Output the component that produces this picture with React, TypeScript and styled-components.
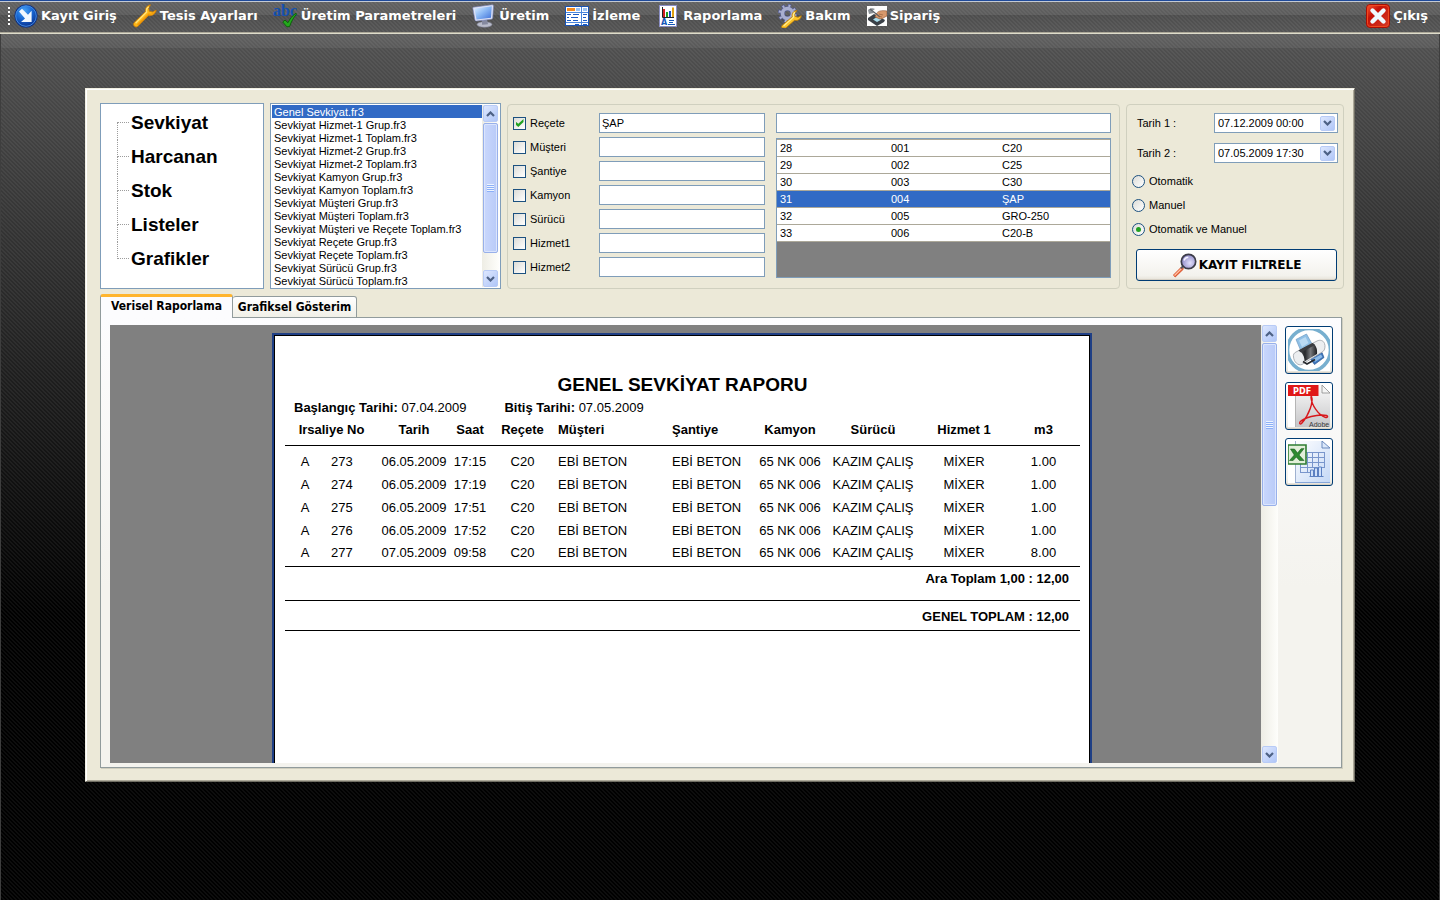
import React, { useState } from "react";
import styled, { createGlobalStyle, css } from "styled-components";

const uiFont = '"Liberation Sans", Arial, sans-serif';
const boldUiFont = '"DejaVu Sans", Verdana, sans-serif';
const tabFont = '"DejaVu Sans Condensed", "DejaVu Sans", Tahoma, sans-serif';

const GlobalStyle = createGlobalStyle`
  *, *::before, *::after { box-sizing: border-box; }
  body { margin: 0; background: #000; color: #000; font: 11px/13px ${uiFont}; }
  button, input, select { font: inherit; color: inherit; margin: 0; }
`;

const stripes = css`
  linear-gradient(45deg, rgba(255,255,255,0.05) 25%, transparent 25%, transparent 50%,
    rgba(255,255,255,0.05) 50%, rgba(255,255,255,0.05) 75%, transparent 75%) 0 0 / 4px 4px
`;

const Screen = styled.div`
  height: 100vh;
  min-height: 700px;
  display: flex;
  flex-direction: column;
`;

/* ---------- toolbar ---------- */

const Toolbar = styled.nav`
  flex: none;
  height: 34px;
  display: flex;
  align-items: center;
  gap: 16px;
  padding: 0 12px 2px 14px;
  border-top: 1px solid #1f4a9a;
  border-bottom: 1px solid #dedccb;
  box-shadow: inset 0 1px 0 #c4cad4, inset 0 -1px 0 #aca899;
  background: ${stripes}, linear-gradient(#626262, #5c5c5c 44%, #4d4d4d 45%, #555555);
`;

const Grip = styled.span`
  width: 2px;
  height: 18px;
  margin: 0 -12px 0 -6px;
  background: repeating-linear-gradient(#ffffff 0 2px, transparent 2px 4px);
`;

const ToolItem = styled.button<{ $last?: boolean }>`
  display: flex;
  align-items: center;
  gap: 3px;
  padding: 0;
  border: 0;
  background: none;
  color: #fff;
  font: bold 13px/24px ${boldUiFont};
  white-space: nowrap;
  margin-left: ${(p) => (p.$last ? "auto" : "0")};
  svg { display: block; flex: none; }
`;

/* ---------- window ---------- */

const Desktop = styled.div`
  flex: 1;
  min-height: 0;
  display: flex;
  padding: 54px 84px 118px;
  border: solid #3e3e3e;
  border-width: 0 1px;
  background: ${stripes},
    linear-gradient(#606060 0, #5a5a5a 14px, #4f4f4f 14px, #363636 180px, #1c1c1c 360px, #000 580px);
`;

const Window = styled.main`
  flex: 1;
  min-width: 0;
  display: flex;
  flex-direction: column;
  padding: 14px 10px 13px 14px;
  background: #ece9d8;
  border: 1px solid;
  border-color: #f1efe2 #716f64 #716f64 #f1efe2;
  box-shadow: inset 1px 1px 0 #fff, inset -1px -1px 0 #aca899;
`;

const FilterRow = styled.section`
  display: flex;
  gap: 6px;
  height: 186px;
  flex: none;
`;

const Tree = styled.ul`
  flex: none;
  width: 164px;
  margin: 0;
  padding: 2px 0 0 16px;
  list-style: none;
  background: #fff;
  border: 1px solid #7f9db9;
`;

const TreeItem = styled.li`
  display: flex;
  align-items: center;
  height: 34px;
`;

const TreeLink = styled.a`
  color: #000;
  text-decoration: none;
  font: bold 19px/24px ${uiFont};
  padding-left: 2px;
`;

const Branch = styled.span`
  display: flex;
  flex-direction: column;
  width: 12px;
  height: 34px;
`;

const BranchHalf = styled.span<{ $stem: boolean; $arm?: boolean }>`
  height: 17px;
  border: 0 dotted #9c9c9c;
  border-left-width: ${(p) => (p.$stem ? "1px" : "0")};
  border-bottom-width: ${(p) => (p.$arm ? "1px" : "0")};
`;

const ListFrame = styled.div`
  flex: none;
  display: flex;
  width: 231px;
  padding: 1px;
  background: #fff;
  border: 1px solid #7f9db9;
`;

const FileList = styled.select`
  flex: 1;
  min-width: 0;
  height: 182px;
  padding: 0;
  border: 0;
  border-radius: 0;
  outline: 0;
  background: #fff;
  overflow: hidden;
  scrollbar-width: none;
  option {
    height: 13px;
    min-height: 13px;
    padding: 1px 2px 0;
    font: 11px/12px ${uiFont};
    color: #000;
  }
  option:checked {
    background: linear-gradient(#316ac5, #316ac5);
    color: #fff;
  }
`;

const Group = styled.fieldset<{ $wide?: boolean }>`
  margin: 1px 0 0;
  border: 1px solid #d0d0bf;
  border-radius: 4px;
  min-width: 0;
  display: flex;
  ${(p) =>
    p.$wide
      ? css`
          flex: 1;
          gap: 11px;
          padding: 8px 8px 10px 5px;
        `
      : css`
          flex: none;
          width: 218px;
          flex-direction: column;
          padding: 8px 5px 0;
        `}
`;

const Criteria = styled.div`
  flex: none;
  display: flex;
  flex-direction: column;
  gap: 4px;
`;

const CriteriaRow = styled.div`
  display: flex;
  align-items: center;
  gap: 4px;
  label { width: 65px; }
`;

const TextBox = styled.input<{ $width?: string }>`
  width: ${(p) => p.$width ?? "100%"};
  height: 20px;
  flex: none;
  padding: 0 2px;
  border: 1px solid #7f9db9;
  border-radius: 0;
  background: #fff;
  outline: 0;
`;

const tick = css`
  appearance: none;
  flex: none;
  width: 13px;
  height: 13px;
  display: grid;
  place-content: center;
  border: 1px solid #1c5180;
  background: linear-gradient(135deg, #dcdcd7, #fff);
`;

const CheckBox = styled.input`
  ${tick}
  &:checked::after {
    content: "";
    width: 8px;
    height: 8px;
    background: #21a121;
    clip-path: polygon(0 30%, 35% 60%, 100% 0, 100% 38%, 35% 100%, 0 68%);
  }
`;

const Radio = styled.input`
  ${tick}
  border-radius: 50%;
  &:checked::after {
    content: "";
    width: 5px;
    height: 5px;
    border-radius: 50%;
    background: #21a121;
  }
`;

const Lookup = styled.div`
  flex: 1;
  min-width: 0;
  display: flex;
  flex-direction: column;
  gap: 5px;
`;

const GridFrame = styled.div`
  flex: 1;
  background: #808080;
  border: 1px solid #7f9db9;
`;

const GridTable = styled.table`
  width: 100%;
  table-layout: fixed;
  border-collapse: collapse;
  border-top: 1px solid #aca899;
  background: #fff;
  td {
    height: 17px;
    padding: 1px 3px 0;
    line-height: 15px;
    border-bottom: 1px solid #aca899;
  }
`;

const GridRow = styled.tr<{ $selected: boolean }>`
  ${(p) =>
    p.$selected &&
    css`
      background: #316ac5;
      color: #fff;
    `}
`;

const DateRow = styled.div`
  display: flex;
  align-items: center;
  justify-content: space-between;
  padding-left: 5px;
  margin-bottom: 10px;
`;

const DateBox = styled.div`
  display: flex;
  align-items: center;
  width: 124px;
  height: 20px;
  padding-right: 2px;
  background: #fff;
  border: 1px solid #7f9db9;
  input {
    flex: 1;
    min-width: 0;
    padding: 0 3px;
    border: 0;
    outline: 0;
    background: none;
  }
`;

const ArrowButton = styled.button<{ $tall?: boolean }>`
  flex: none;
  display: grid;
  place-content: center;
  width: 15px;
  height: ${(p) => (p.$tall ? "17px" : "15px")};
  padding: 0;
  border: 1px solid #b8cbf6;
  border-radius: 2px;
  background: linear-gradient(135deg, #dde7fe, #b0c6f8);
  svg { display: block; }
`;

const RadioList = styled.div`
  margin-top: -4px;
`;

const RadioRow = styled.label`
  display: flex;
  align-items: center;
  gap: 4px;
  height: 24px;
`;

const XpButton = styled.button`
  display: flex;
  align-items: center;
  justify-content: center;
  padding: 0;
  border: 1px solid #003c74;
  border-radius: 3px;
  background: linear-gradient(#fff, #f3f2ed 85%, #e6e2d8);
  box-shadow: inset 0 -1px 0 #d6d0c5;
`;

const FilterButton = styled(XpButton)`
  height: 32px;
  margin: 8px 1px 0 4px;
  gap: 2px;
  font: bold 12px/16px ${boldUiFont};
  white-space: nowrap;
`;

/* ---------- tabs and report viewer ---------- */

const TabBar = styled.div`
  display: flex;
  align-items: flex-end;
  flex: none;
  height: 24px;
  margin: 5px 0 -1px;
`;

const Tab = styled.button<{ $active?: boolean }>`
  font: bold 12px/16px ${tabFont};
  border: 1px solid #919b9c;
  border-radius: 3px 3px 0 0;
  white-space: nowrap;
  ${(p) =>
    p.$active
      ? css`
          width: 133px;
          height: 24px;
          padding: 0 0 4px;
          border-top: 3px solid #ffb52e;
          border-bottom: 0;
          background: #fcfcfe;
        `
      : css`
          width: 124px;
          height: 22px;
          padding: 0;
          border-left: 0;
          background: linear-gradient(#fff, #f1f0e8);
        `}
`;

const TabPanel = styled.section`
  flex: 1;
  min-height: 0;
  display: flex;
  margin-right: 2px;
  padding: 7px 8px 4px 9px;
  border: 1px solid #919b9c;
  background: linear-gradient(#fcfcfe, #f4f3ee 60%);
  box-shadow: 1px 1px 0 #d0cebf;
`;

/* The tab row overlaps this edge so that the active tab opens into the panel. */
const TabbedArea = styled.div`
  flex: 1;
  min-height: 0;
  display: flex;
  flex-direction: column;
  ${Tab} { z-index: 1; }
`;

const Viewer = styled.div`
  flex: 1;
  min-width: 0;
  display: flex;
  justify-content: center;
  padding: 8px 7px 0 0;
  overflow: hidden;
  background: #808080;
`;

const Paper = styled.article`
  width: 820px;
  flex: none;
  padding: 37px 10px 0 11px;
  border: solid #1f3f85;
  border-width: 2px 2px 0;
  box-shadow: inset 1px 1px 0 #000, inset -1px 0 0 #000;
  background: #fff;
  font-size: 13px;
  line-height: 16px;
`;

const ReportTitle = styled.h1`
  margin: 0 0 8px;
  padding-top: 2px;
  text-align: center;
  font: bold 19px/22px ${uiFont};
`;

const Period = styled.p`
  display: flex;
  gap: 38px;
  margin: -4px 0 0 9px;
`;

const ReportTable = styled.table`
  width: 100%;
  margin-top: 1px;
  table-layout: fixed;
  border-collapse: collapse;
  text-align: center;
  white-space: nowrap;
  th, td { padding: 0; }
  thead th { height: 28px; padding-bottom: 1px; border-bottom: 1px solid #000; }
  tbody td { height: 23px; }
  tbody tr:first-child td { height: 28px; padding-top: 6px; }
  tbody tr:last-child td { height: 24px; padding-bottom: 2px; }
  thead th:last-child, tbody td:last-child { padding-right: 5px; }
  tfoot td {
    height: 34px;
    padding: 4px 11px 0 0;
    vertical-align: top;
    border-top: 1px solid #000;
    text-align: right;
    font-weight: bold;
  }
  tfoot tr:last-child td {
    height: 30px;
    padding-top: 8px;
    border-bottom: 1px solid #000;
  }
`;

const Cell = styled.td<{ $left?: number }>`
  ${(p) => p.$left !== undefined && css`text-align: left; && { padding-left: ${p.$left}px; }`}
`;

const HeadCell = styled.th<{ $left?: number }>`
  ${(p) => p.$left !== undefined && css`text-align: left; && { padding-left: ${p.$left}px; }`}
`;

const Actions = styled.div`
  flex: none;
  display: flex;
  flex-direction: column;
  gap: 8px;
  margin-left: 7px;
  padding-top: 1px;
`;

const ActionButton = styled(XpButton)`
  width: 48px;
  height: 48px;
  svg { display: block; }
`;

/* ---------- scroll bar ---------- */

const ScrollTrack = styled.div`
  flex: none;
  width: 17px;
  display: flex;
  flex-direction: column;
  align-items: center;
  gap: 1px;
  background: linear-gradient(90deg, #eeede5, #fefefb);
`;

const ScrollSpace = styled.div`
  flex: 1;
  min-height: 0;
  width: 15px;
`;

const ScrollThumb = styled.div<{ $size: string }>`
  height: ${(p) => p.$size};
  display: grid;
  place-content: center;
  border: 1px solid #98b0ea;
  border-radius: 2px;
  box-shadow: inset 0 0 0 1px #dbe5fd;
  background: linear-gradient(90deg, #c9d7fc, #b9cbf8);
`;

const ThumbLines = styled.span`
  width: 7px;
  height: 8px;
  background: repeating-linear-gradient(#eef4fe 0 1px, #8cb0f8 1px 2px);
`;

const Chevron = ({ up }: { up?: boolean }) => (
  <svg width="9" height="6" viewBox="0 0 9 6" aria-hidden="true">
    <path d={up ? "M1 5l3.500-3.500L8 5" : "M1 1l3.500 3.500L8 1"} fill="none" stroke="#4d6185" strokeWidth="2.200" />
  </svg>
);

const ScrollBar = ({ size }: { size: string }) => (
  <ScrollTrack>
    <ArrowButton $tall type="button" aria-label="Yukarı"><Chevron up /></ArrowButton>
    <ScrollSpace>
      <ScrollThumb $size={size}><ThumbLines /></ScrollThumb>
    </ScrollSpace>
    <ArrowButton $tall type="button" aria-label="Aşağı"><Chevron /></ArrowButton>
  </ScrollTrack>
);

/* ---------- icons ---------- */

const LoginIcon = () => (
  <svg width="24" height="24" viewBox="0 0 24 24">
    <defs>
      <radialGradient id="login" cx="40%" cy="25%" r="80%">
        <stop offset="0" stopColor="#4aa3f5" />
        <stop offset=".5" stopColor="#1868d4" />
        <stop offset="1" stopColor="#0a2f8c" />
      </radialGradient>
    </defs>
    <circle cx="12" cy="12" r="11.500" fill="#0b2f86" />
    <circle cx="12" cy="12" r="10.300" fill="url(#login)" stroke="#4f9df0" strokeWidth=".8" />
    <path d="M5 7.500L8 4.800l6 6 3.600-4V18H7l4-3.500z" fill="#f1f8ff" />
  </svg>
);

const WrenchIcon = () => (
  <svg width="24" height="24" viewBox="0 0 24 24">
    <path
      d="M17.500.8c-3 .5-5.600 3-5 6.800L1.200 18.500c-1 1-.9 2.500 0 3.600 1.100 1.100 2.800 1.200 3.800.1L15.500 11.500c3.500.9 6.900-1.400 7.700-5.500L19.600 8l-3.300-.8-.6-3.100z"
      fill="#fdb515" stroke="#c77a08" strokeWidth=".8"
    />
    <path d="M15.600 2.900c-1.800 1.200-2.500 2.900-1.900 5.200L2.600 19.200" fill="none" stroke="#ffe37c" strokeWidth="1.400" />
    <path d="M22 7.800c-1.300 1.800-3.600 2.900-6.200 2.300L4.600 21" fill="none" stroke="#ee960c" strokeWidth="1.100" />
  </svg>
);

const SpellIcon = () => (
  <svg width="24" height="24" viewBox="0 0 24 24" overflow="visible">
    <text x="-1" y="12" fontFamily="Liberation Serif, serif" fontWeight="bold" fontSize="16" fill="#1450ae">abc</text>
    <path d="M8.700 18l2.300-1.900 3 2.600c1.800-3.700 4.400-7.200 7.900-9.500l.7.800c-3.200 3.700-5.300 7.600-7 12.500l-2.600.4z" fill="#24a81c" stroke="#085c08" strokeWidth=".9" />
  </svg>
);

const MonitorIcon = () => (
  <svg width="24" height="24" viewBox="0 0 24 24">
    <defs>
      <linearGradient id="screen" x1="0" y1="0" x2="1" y2="1">
        <stop offset="0" stopColor="#e4f1ff" />
        <stop offset=".45" stopColor="#8fbcf6" />
        <stop offset="1" stopColor="#3d6fd9" />
      </linearGradient>
    </defs>
    <ellipse cx="12.500" cy="20.500" rx="7.500" ry="2.800" fill="#b9bccb" stroke="#7f8296" strokeWidth=".6" />
    <path d="M10 15.500l5-.4 1 5.200-6 .4z" fill="#85899f" />
    <path d="M1.400 3.200L20 .8c1 0 1.600.5 1.500 1.500l-.8 11.500c0 .8-.6 1.300-1.400 1.400L4.600 17c-.9.100-1.600-.4-1.700-1.300L.8 4.300c0-.6.100-1 .6-1.100z" fill="#dfe3f6" stroke="#7482b8" strokeWidth=".6" />
    <path d="M2.500 4.500L19.800 2.200l-.8 11.500L4.500 15.400z" fill="url(#screen)" />
  </svg>
);

const TableIcon = () => (
  <svg width="24" height="24" viewBox="0 0 24 24">
    <rect x=".5" y="2.500" width="23" height="19" fill="#fff" stroke="#1b54b4" />
    <path d="M16.500 3v18M1 8.500h22M1 18.500h22" stroke="#4a86dc" fill="none" />
    <rect x="2" y="4" width="8" height="3" fill="#f58a1e" />
    <path d="M11 5.500h4M18 5.500h4" stroke="#9dc3f3" strokeWidth="3" />
    <path d="M2 10.500h4M8 10.500h6M2 13.500h2M6 13.500h7M2 16.500h4M8 16.500h5M10 20.500h4M18 10.500h4M18 13.500h3M18 16.500h4M18 20.500h4" stroke="#1d5cc4" />
  </svg>
);

const ReportIcon = () => (
  <svg width="24" height="24" viewBox="0 0 24 24">
    <rect x="3.500" y="1.500" width="17" height="21" fill="#fff" stroke="#8b8fc4" />
    <path d="M6.500 3v10.500H18" stroke="#222" fill="none" />
    <path d="M7 5h2v8H7z" fill="#d42020" />
    <path d="M10 8h2v5h-2z" fill="#22a022" />
    <path d="M13 7h2v6h-2z" fill="#1c4fc0" />
    <path d="M16 3.500h2V13h-2z" fill="#e0a010" />
    <text x="5" y="21" fontFamily="DejaVu Sans, sans-serif" fontWeight="bold" fontSize="8" fill="#1658b8">A</text>
    <path d="M13 16.500h5M13 18.500h4M12 20.500h7" stroke="#1658b8" />
  </svg>
);

const MaintenanceIcon = () => (
  <svg width="24" height="24" viewBox="0 0 24 24">
    <g fill="none">
      <circle cx="9.500" cy="9.500" r="8" stroke="#555c8c" strokeWidth="3.400" strokeDasharray="3.400 2.883" />
      <circle cx="9.500" cy="9.500" r="5" stroke="#555c8c" strokeWidth="5" />
      <circle cx="9.500" cy="9.500" r="5" stroke="#a9afd0" strokeWidth="3.600" />
      <circle cx="9.500" cy="9.500" r="7.800" stroke="#a9afd0" strokeWidth="2.400" strokeDasharray="2 4.127" strokeDashoffset="-.7" />
    </g>
    <path
      d="M19 6.500c-3.300.2-5.600 3-4.700 6.200L4 21.500c-.8.900-.5 2.300.5 2.500h3.300l8.800-7.700c3.300.7 6.300-1.200 6.700-4.600L20 13.300l-3-.9-.4-2.900z"
      fill="#fdc52a" stroke="#b97a08" strokeWidth=".8"
    />
    <path d="M17 8.300c-1.500 1.200-2 2.600-1.400 4.800L5.600 22" stroke="#ffed96" strokeWidth="1.200" fill="none" />
  </svg>
);

const OrderIcon = () => (
  <svg width="20" height="20" viewBox="0 0 20 20">
    <rect width="20" height="20" fill="#fdfdfd" />
    <path d="M1 4c2-2 5-2 7-1l-3 2 2 2-5 1z" fill="#8a9096" />
    <path d="M1 12l6-4 11 6-1 2-7 4-9-6z" fill="#3a4047" />
    <path d="M6 13.500l4-2.500 4.500 2.500-4.500 2.500z" fill="#a8dcec" />
    <path d="M9 8c2-3 5-4 11-3v5c-3 1-4 3-7 3l-5-2z" fill="#d7986b" stroke="#8e5634" strokeWidth=".6" />
    <path d="M3 3l10 8" stroke="#5c6268" strokeWidth="1.200" />
    <path d="M12 8l4 1M11 10l4 1" stroke="#9a603c" strokeWidth=".7" />
  </svg>
);

const ExitIcon = () => (
  <svg width="24" height="24" viewBox="0 0 24 24">
    <defs>
      <linearGradient id="exit" x1="0" y1="0" x2="1" y2="1">
        <stop offset="0" stopColor="#ff5a32" />
        <stop offset=".35" stopColor="#c41208" />
        <stop offset="1" stopColor="#d63c28" />
      </linearGradient>
    </defs>
    <rect x=".5" y=".5" width="23" height="23" rx="3.500" fill="url(#exit)" stroke="#a80f05" />
    <rect x="1.500" y="1.500" width="21" height="21" rx="3" fill="none" stroke="#f04a20" />
    <path d="M6.500 6.500l11 11M17.500 6.500l-11 11" stroke="#f0f9ff" strokeWidth="4.400" strokeLinecap="round" />
  </svg>
);

const MagnifierIcon = () => (
  <svg width="25" height="25" viewBox="0 0 25 25">
    <defs>
      <radialGradient id="lens" cx="60%" cy="60%" r="65%">
        <stop offset="0" stopColor="#e2e0fb" />
        <stop offset="1" stopColor="#8782c4" />
      </radialGradient>
    </defs>
    <path d="M9.500 14L1.500 22l1.700 2L11.500 16z" fill="#f0663a" stroke="#d04a24" strokeWidth=".9" />
    <path d="M9.500 15.500l-7 7" stroke="#ffc3a8" strokeWidth="1.100" />
    <path d="M9 15.500l2-2.500" stroke="#55555f" strokeWidth="2" />
    <circle cx="16.500" cy="8.500" r="7.200" fill="url(#lens)" stroke="#3c3c48" strokeWidth="1.700" />
    <path d="M12 7.500c.6-2 2-3.200 4.300-3.300" stroke="#f5f4ff" strokeWidth="1.500" fill="none" />
  </svg>
);

const PrinterIcon = () => (
  <svg width="42" height="42" viewBox="0 0 42 42">
    <defs>
      <linearGradient id="printer" x1="0" y1="0" x2="1" y2="0">
        <stop offset="0" stopColor="#55585c" />
        <stop offset=".35" stopColor="#26282b" />
        <stop offset=".65" stopColor="#77797d" />
        <stop offset="1" stopColor="#1a1b1e" />
      </linearGradient>
    </defs>
    <rect width="42" height="42" fill="#fff" />
    <circle cx="21" cy="21" r="21.500" fill="none" stroke="#77afcf" strokeWidth="3.600" />
    <path d="M8 10.500L18.500 5l5 9-11 7z" fill="#8fc0e6" stroke="#6f9cc4" strokeWidth=".7" />
    <path d="M11 11.500l6.500-3.500 3 6-6.500 4z" fill="#b9daf3" />
    <path d="M22 29.500l12-6 2 5-9.500 7z" fill="#3e76bd" stroke="#2a5790" strokeWidth=".7" />
    <path d="M25 30l8-4.500 1.500 2.500-7.500 5z" fill="#8dbbe8" />
    <path d="M5.500 28C5 25.500 6 24 8 23l21-11c3-1.500 6.500-.5 7.500 2.500 1 2.500.5 6.500-1.500 8L14 35.500c-4 1.500-8-2.500-8.500-7.500z" fill="#eceef0" stroke="#9aa0a6" strokeWidth=".8" />
    <path d="M10.500 21.500L24.500 14c3.500 2 5 6 4.500 11l-12.500 7.500c0-5-2-9-6-11z" fill="url(#printer)" />
    <path d="M10.500 21.500L24.500 14l2.500 2-14 7.500z" fill="#3a3c40" />
    <path d="M15 32.500l4 2.500 8-4.500" fill="none" stroke="#27292d" strokeWidth="1.600" />
  </svg>
);

const PdfIcon = () => (
  <svg width="42" height="42" viewBox="0 0 42 42">
    <defs>
      <linearGradient id="pdf" x1="0" y1="0" x2="0" y2="1">
        <stop offset="0" stopColor="#fafafa" />
        <stop offset="1" stopColor="#c6c6c8" />
      </linearGradient>
    </defs>
    <rect width="42" height="42" fill="#fff" />
    <path d="M7 0h27l8 8v34H7z" fill="url(#pdf)" />
    <path d="M7.500 10v32" stroke="#b5b5b5" />
    <path d="M34 0v8h8z" fill="#f5f5f5" stroke="#8c8c8c" strokeWidth=".8" />
    <rect width="30.500" height="11" fill="#e01818" />
    <text x="5" y="9" fontFamily="DejaVu Sans Condensed, sans-serif" fontWeight="bold" fontSize="9" fill="#fff">PDF</text>
    <path
      d="M23.500 11.500c2 5-2 18-10 27-1.200 1-2.500.2-1.500-1.500C15 33 30 28.500 38.500 30.500c2 .7 1 2.500-1.300 1.800C30.500 30 23.500 20 23 12.500c0-1.300.3-1.700.5-1z"
      fill="none" stroke="#d8171b" strokeWidth="1.400"
    />
    <text x="21" y="42" fontFamily="Liberation Sans, sans-serif" fontSize="7" fill="#3a3a3a">Adobe</text>
  </svg>
);

const ExcelIcon = () => (
  <svg width="42" height="42" viewBox="0 0 42 42">
    <defs>
      <linearGradient id="sheet" x1="0" y1="0" x2="1" y2="1">
        <stop offset="0" stopColor="#fff" />
        <stop offset="1" stopColor="#c4d8f6" />
      </linearGradient>
    </defs>
    <rect width="42" height="42" fill="#fff" />
    <path d="M7 0h27l8 8v34H7z" fill="url(#sheet)" />
    <path d="M7.500 0v42" stroke="#9fb1d0" />
    <path d="M34 0v7h8z" fill="#dce9fb" stroke="#5f7fb5" strokeWidth=".9" />
    <path d="M7 41.500h35" stroke="#86a6da" />
    <path d="M12 11.500h25M12 16.500h25M12 21.500h25M12 26.500h25M12 31.500h21M19.500 11v21M24.500 11v15M30.500 11v14M36.500 11v15M12.500 20v12" stroke="#7996cc" fill="none" />
    <path d="M21.500 35.500h14M22.500 35v-6h3v6M26.500 35v-8h3v8M30.500 35v-9h3v9" fill="#cfe0fa" stroke="#5b80c2" />
    <path d="M0 4h18v19H0z" fill="#e2efd9" stroke="#2f7d32" strokeWidth="1.600" />
    <path d="M2.500 8l4 .1 3 4 3.500-4.300 3-.2-5 6.400 5 5.500h-4.500L8.300 16l-3.200 3.500H1.500L6.300 14z" fill="#2e8b2f" stroke="#1b5a20" strokeWidth=".6" />
  </svg>
);

/* ---------- data ---------- */

const menu: [string, () => React.JSX.Element][] = [
  ["Kayıt Giriş", LoginIcon],
  ["Tesis Ayarları", WrenchIcon],
  ["Üretim Parametreleri", SpellIcon],
  ["Üretim", MonitorIcon],
  ["İzleme", TableIcon],
  ["Raporlama", ReportIcon],
  ["Bakım", MaintenanceIcon],
  ["Sipariş", OrderIcon],
];

const treeItems = ["Sevkiyat", "Harcanan", "Stok", "Listeler", "Grafikler"];

const files = [
  "Genel Sevkiyat.fr3",
  "Sevkiyat Hizmet-1 Grup.fr3",
  "Sevkiyat Hizmet-1 Toplam.fr3",
  "Sevkiyat Hizmet-2 Grup.fr3",
  "Sevkiyat Hizmet-2 Toplam.fr3",
  "Sevkiyat Kamyon Grup.fr3",
  "Sevkiyat Kamyon Toplam.fr3",
  "Sevkiyat Müşteri Grup.fr3",
  "Sevkiyat Müşteri Toplam.fr3",
  "Sevkiyat Müşteri ve Reçete Toplam.fr3",
  "Sevkiyat Reçete Grup.fr3",
  "Sevkiyat Reçete Toplam.fr3",
  "Sevkiyat Sürücü Grup.fr3",
  "Sevkiyat Sürücü Toplam.fr3",
];

const criteria = ["Reçete", "Müşteri", "Şantiye", "Kamyon", "Sürücü", "Hizmet1", "Hizmet2"];

const recipes = [
  ["28", "001", "C20"],
  ["29", "002", "C25"],
  ["30", "003", "C30"],
  ["31", "004", "ŞAP"],
  ["32", "005", "GRO-250"],
  ["33", "006", "C20-B"],
];

const dates = [
  ["Tarih 1 :", "07.12.2009 00:00"],
  ["Tarih 2 :", "07.05.2009 17:30"],
];

const modes = ["Otomatik", "Manuel", "Otomatik ve Manuel"];

const columnWidths = [40, 53, 72, 40, 65, 114, 81, 80, 86, 96, 68];

const deliveries = [
  ["273", "06.05.2009", "17:15", "1.00"],
  ["274", "06.05.2009", "17:19", "1.00"],
  ["275", "06.05.2009", "17:51", "1.00"],
  ["276", "06.05.2009", "17:52", "1.00"],
  ["277", "07.05.2009", "09:58", "8.00"],
];

export default function App() {
  const [file, setFile] = useState(files[0]);
  const [recipe, setRecipe] = useState("31");

  return (
    <Screen>
      <GlobalStyle />
      <Toolbar>
        <Grip />
        {menu.map(([label, Icon]) => (
          <ToolItem key={label} type="button"><Icon />{label}</ToolItem>
        ))}
        <ToolItem $last type="button"><ExitIcon />Çıkış</ToolItem>
      </Toolbar>
      <Desktop>
        <Window>
          <FilterRow>
            <Tree>
              {treeItems.map((item, i) => (
                <TreeItem key={item}>
                  <Branch>
                    <BranchHalf $stem={i > 0} $arm />
                    <BranchHalf $stem={i < treeItems.length - 1} />
                  </Branch>
                  <TreeLink href="#">{item}</TreeLink>
                </TreeItem>
              ))}
            </Tree>
            <ListFrame>
              <FileList size={14} aria-label="Rapor dosyaları" value={file} onChange={(e) => setFile(e.target.value)}>
                {files.map((name) => <option key={name}>{name}</option>)}
              </FileList>
              <ScrollBar size="130px" />
            </ListFrame>
            <Group $wide>
              <Criteria>
                {criteria.map((name, i) => (
                  <CriteriaRow key={name}>
                    <CheckBox type="checkbox" id={`use-${i}`} defaultChecked={i === 0} />
                    <label htmlFor={`use-${i}`}>{name}</label>
                    <TextBox $width="166px" aria-label={name} defaultValue={i === 0 ? "ŞAP" : ""} />
                  </CriteriaRow>
                ))}
              </Criteria>
              <Lookup>
                <TextBox aria-label="Ara" />
                <GridFrame>
                  <GridTable>
                    <tbody>
                      {recipes.map((row) => (
                        <GridRow key={row[0]} $selected={row[0] === recipe} onClick={() => setRecipe(row[0])}>
                          {row.map((value) => <td key={value}>{value}</td>)}
                        </GridRow>
                      ))}
                    </tbody>
                  </GridTable>
                </GridFrame>
              </Lookup>
            </Group>
            <Group>
              {dates.map(([label, value], i) => (
                <DateRow key={label}>
                  <label htmlFor={`date-${i}`}>{label}</label>
                  <DateBox>
                    <input id={`date-${i}`} defaultValue={value} />
                    <ArrowButton type="button" aria-label="Takvim"><Chevron /></ArrowButton>
                  </DateBox>
                </DateRow>
              ))}
              <RadioList>
                {modes.map((mode, i) => (
                  <RadioRow key={mode}>
                    <Radio type="radio" name="mode" defaultChecked={i === 2} />
                    {mode}
                  </RadioRow>
                ))}
              </RadioList>
              <FilterButton type="button"><MagnifierIcon />KAYIT FILTRELE</FilterButton>
            </Group>
          </FilterRow>

          <TabbedArea>
            <TabBar role="tablist">
              <Tab $active type="button" role="tab" aria-selected>Verisel Raporlama</Tab>
              <Tab type="button" role="tab" aria-selected={false}>Grafiksel Gösterim</Tab>
            </TabBar>
            <TabPanel>
              <Viewer>
                <Paper>
                  <ReportTitle>GENEL SEVKİYAT RAPORU</ReportTitle>
                  <Period>
                    <span><b>Başlangıç Tarihi:</b> 07.04.2009</span>
                    <span><b>Bitiş Tarihi:</b> 07.05.2009</span>
                  </Period>
                  <ReportTable>
                    <colgroup>
                      {columnWidths.map((w, i) => <col key={i} width={w} />)}
                    </colgroup>
                    <thead>
                      <tr>
                        <HeadCell colSpan={2}>Irsaliye No</HeadCell>
                        <HeadCell>Tarih</HeadCell>
                        <HeadCell>Saat</HeadCell>
                        <HeadCell>Reçete</HeadCell>
                        <HeadCell $left={3}>Müşteri</HeadCell>
                        <HeadCell $left={3}>Şantiye</HeadCell>
                        <HeadCell>Kamyon</HeadCell>
                        <HeadCell>Sürücü</HeadCell>
                        <HeadCell>Hizmet 1</HeadCell>
                        <HeadCell>m3</HeadCell>
                      </tr>
                    </thead>
                    <tbody>
                      {deliveries.map(([no, date, time, volume]) => (
                        <tr key={no}>
                          <Cell>A</Cell>
                          <Cell $left={6}>{no}</Cell>
                          <Cell>{date}</Cell>
                          <Cell>{time}</Cell>
                          <Cell>C20</Cell>
                          <Cell $left={3}>EBİ BETON</Cell>
                          <Cell $left={3}>EBİ BETON</Cell>
                          <Cell>65 NK 006</Cell>
                          <Cell>KAZIM ÇALIŞ</Cell>
                          <Cell>MİXER</Cell>
                          <Cell>{volume}</Cell>
                        </tr>
                      ))}
                    </tbody>
                    <tfoot>
                      <tr><td colSpan={11}>Ara Toplam 1,00 : 12,00</td></tr>
                      <tr><td colSpan={11}>GENEL TOPLAM : 12,00</td></tr>
                    </tfoot>
                  </ReportTable>
                </Paper>
              </Viewer>
              <ScrollBar size="163px" />
              <Actions>
                <ActionButton type="button" aria-label="Yazdır"><PrinterIcon /></ActionButton>
                <ActionButton type="button" aria-label="PDF"><PdfIcon /></ActionButton>
                <ActionButton type="button" aria-label="Excel"><ExcelIcon /></ActionButton>
              </Actions>
            </TabPanel>
          </TabbedArea>
        </Window>
      </Desktop>
    </Screen>
  );
}
